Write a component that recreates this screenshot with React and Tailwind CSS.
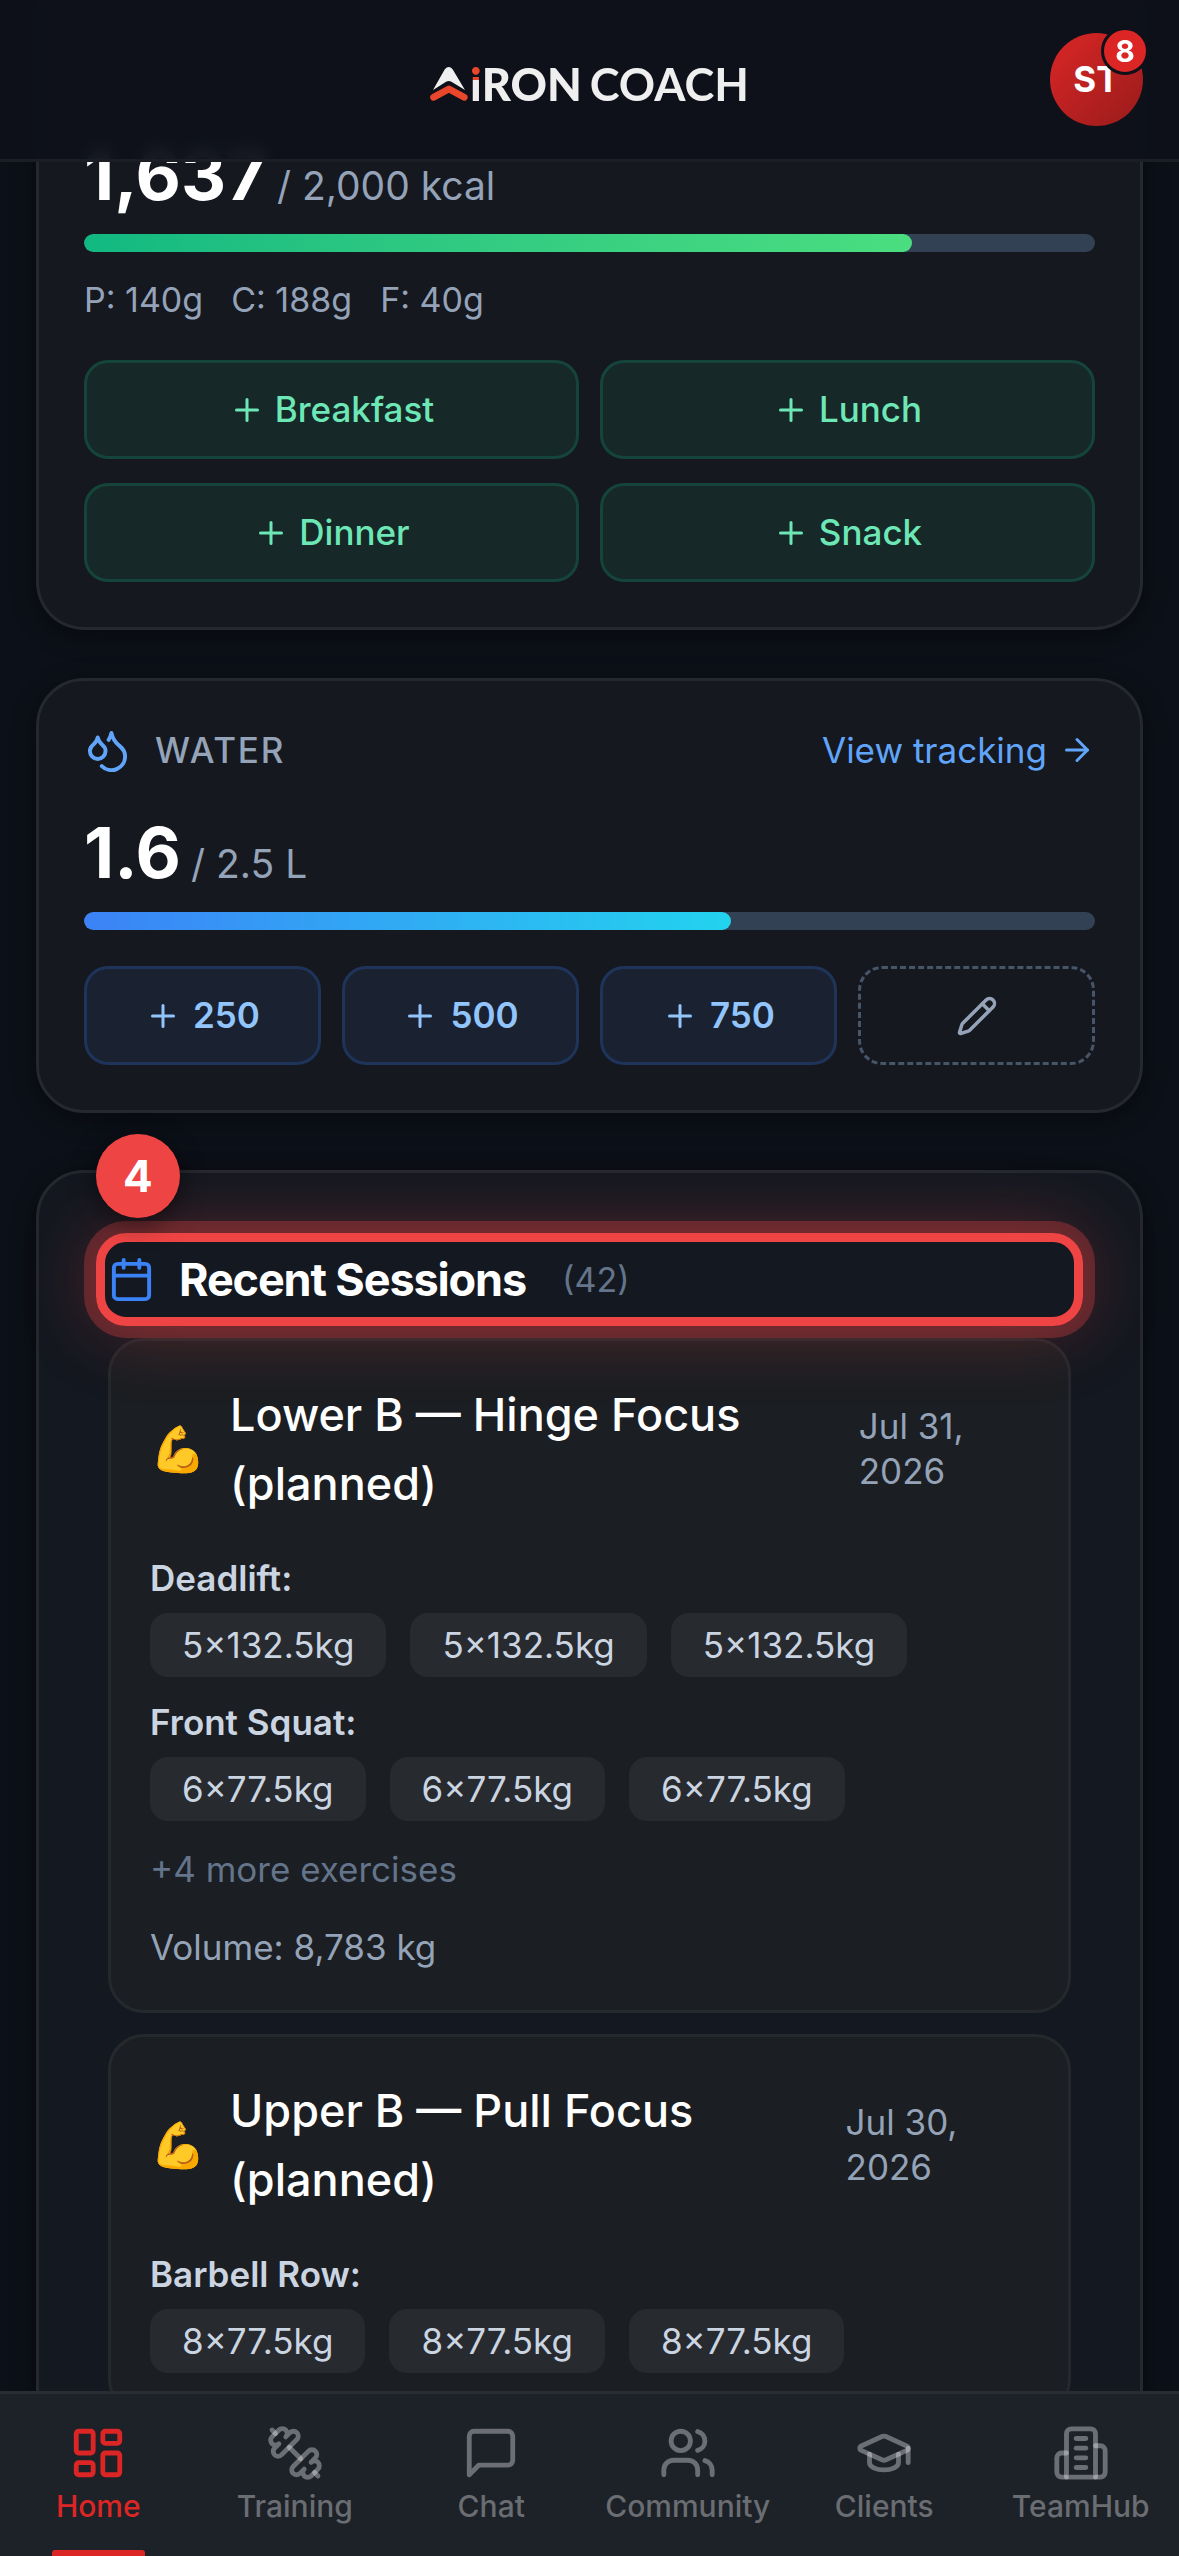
import { useState } from 'react'
import { ArrowRight, Calendar, Droplets, Pencil, Plus } from 'lucide-react'

const meals = ['Breakfast', 'Lunch', 'Dinner', 'Snack']
const waterAmounts = [250, 500, 750]

const sessions = [
  {
    title: 'Lower B — Hinge Focus (planned)',
    date: 'Jul 31, 2026',
    exercises: [
      { name: 'Deadlift', sets: ['5×132.5kg', '5×132.5kg', '5×132.5kg'] },
      { name: 'Front Squat', sets: ['6×77.5kg', '6×77.5kg', '6×77.5kg'] },
    ],
    more: 4,
    volume: '8,783',
  },
  {
    title: 'Upper B — Pull Focus (planned)',
    date: 'Jul 30, 2026',
    exercises: [
      { name: 'Barbell Row', sets: ['8×77.5kg', '8×77.5kg', '8×77.5kg'] },
    ],
  },
]

const navItems = [
  {
    label: 'Home',
    paths: [
      'M4 3h5a1 1 0 0 1 1 1v7a1 1 0 0 1-1 1H4a1 1 0 0 1-1-1V4a1 1 0 0 1 1-1z',
      'M15 3h5a1 1 0 0 1 1 1v3a1 1 0 0 1-1 1h-5a1 1 0 0 1-1-1V4a1 1 0 0 1 1-1z',
      'M15 12h5a1 1 0 0 1 1 1v7a1 1 0 0 1-1 1h-5a1 1 0 0 1-1-1v-7a1 1 0 0 1 1-1z',
      'M4 16h5a1 1 0 0 1 1 1v3a1 1 0 0 1-1 1H4a1 1 0 0 1-1-1v-3a1 1 0 0 1 1-1z',
    ],
  },
  {
    label: 'Training',
    paths: [
      'M14.4 14.4 9.6 9.6',
      'M18.657 21.485a2 2 0 1 1-2.829-2.828l-1.767 1.768a2 2 0 1 1-2.829-2.829l6.364-6.364a2 2 0 1 1 2.829 2.829l-1.768 1.767a2 2 0 1 1 2.828 2.829z',
      'm21.5 21.5-1.4-1.4',
      'M3.9 3.9 2.5 2.5',
      'M6.404 12.768a2 2 0 1 1-2.829-2.829l1.768-1.767a2 2 0 1 1-2.828-2.829l2.828-2.828a2 2 0 1 1 2.829 2.828l1.767-1.768a2 2 0 1 1 2.829 2.829z',
    ],
  },
  {
    label: 'Chat',
    paths: ['M21 15a2 2 0 0 1-2 2H7l-4 4V5a2 2 0 0 1 2-2h14a2 2 0 0 1 2 2z'],
  },
  {
    label: 'Community',
    paths: [
      'M16 21v-2a4 4 0 0 0-4-4H6a4 4 0 0 0-4 4v2',
      'M9 3a4 4 0 1 1 0 8a4 4 0 1 1 0-8z',
      'M22 21v-2a4 4 0 0 0-3-3.87',
      'M16 3.13a4 4 0 0 1 0 7.75',
    ],
  },
  {
    label: 'Clients',
    paths: [
      'M21.42 10.922a1 1 0 0 0-.019-1.838L12.83 5.18a2 2 0 0 0-1.66 0L2.6 9.08a1 1 0 0 0 0 1.832l8.57 3.908a2 2 0 0 0 1.66 0z',
      'M22 10v6',
      'M6 12.5V16a6 3 0 0 0 12 0v-3.5',
    ],
  },
  {
    label: 'TeamHub',
    paths: [
      'M6 22V4a2 2 0 0 1 2-2h8a2 2 0 0 1 2 2v18Z',
      'M6 12H4a2 2 0 0 0-2 2v6a2 2 0 0 0 2 2h2',
      'M18 9h2a2 2 0 0 1 2 2v9a2 2 0 0 1-2 2h-2',
      'M10 6h4',
      'M10 10h4',
      'M10 14h4',
      'M10 18h4',
    ],
  },
]

function Logo() {
  return (
    <div className="flex items-center font-[Lato,sans-serif] text-[45px] leading-[54px] text-[#efefef]">
      <svg viewBox="0 0 38 34" className="mr-0.5 h-[34px] w-[38px]">
        <path d="M14.8 2.2Q18.7 -2 22.6 2.2L35 23L21 14.6Q18.7 13.2 16.5 14.6L3 23Z" fill="#efefef" />
        <path d="M3.6 30.3 18.9 22 34.2 30.3" fill="none" stroke="#e8472b" strokeWidth="6.8" strokeLinecap="round" strokeLinejoin="round" />
      </svg>
      <span className="bg-[linear-gradient(#e8472b_43%,#efefef_43%)] bg-clip-text font-black text-transparent">i</span>
      <span className="font-black">RON</span>
      <span className="ml-2 font-bold">COACH</span>
    </div>
  )
}

function Header() {
  return (
    <header className="fixed inset-x-0 top-0 z-20 flex h-[162px] items-center justify-center border-b-3 border-[#1b1e24] bg-[#0e1119]/95 backdrop-blur-sm">
      <div className="mt-2">
        <Logo />
      </div>
      <button
        type="button"
        className="absolute right-9 top-[33px] size-[93px] rounded-full bg-linear-to-br from-[#dc2626] to-[#991b1b] text-[35px] font-bold text-white"
      >
        ST
        <span className="absolute -right-[6px] -top-[6px] flex size-12 items-center justify-center rounded-full border-3 border-[#0e1119] bg-[#dc2626] text-[30px]">
          8
        </span>
      </button>
    </header>
  )
}

function ProgressBar({ value, total, fill }) {
  return (
    <div className="h-[18px] overflow-hidden rounded-full bg-[#334155]">
      <div className={`h-full rounded-full bg-linear-to-r ${fill}`} style={{ width: `${(value / total) * 100}%` }} />
    </div>
  )
}

function Amount({ value, goal }) {
  return (
    <p className="mb-4 flex items-baseline gap-2.5 text-[70px] font-bold leading-[86px] text-white">
      {value}
      <span className="text-[39px] font-normal leading-12 text-[#94a3b8]">/ {goal}</span>
    </p>
  )
}

function NutritionCard() {
  return (
    <section className="rounded-b-[48px] border-3 border-t-0 border-[#25282e] bg-[#15181f] px-[45px] pb-[45px] pt-[132px] shadow-[0_6px_24px_rgba(0,0,0,0.4)]">
      <Amount value="1,637" goal="2,000 kcal" />
      <ProgressBar value={1637} total={2000} fill="from-[#10b981] to-[#4ade80]" />
      <div className="mt-6 flex gap-7 text-[34px] leading-12 text-[#94a3b8]">
        <span>P: 140g</span>
        <span>C: 188g</span>
        <span>F: 40g</span>
      </div>
      <div className="mt-9 grid grid-cols-2 gap-x-[21px] gap-y-6">
        {meals.map((meal) => (
          <button
            key={meal}
            type="button"
            className="flex h-[99px] items-center justify-center gap-2.5 rounded-3xl border-3 border-[#15453a] bg-[#162827] text-[35px] font-medium text-[#6ee7b7]"
          >
            <Plus size={36} />
            {meal}
          </button>
        ))}
      </div>
    </section>
  )
}

function WaterCard() {
  const [amount, setAmount] = useState(1600)

  return (
    <section className="mt-12 rounded-[48px] border-3 border-[#25282e] bg-[#15181f] p-[45px] shadow-[0_6px_24px_rgba(0,0,0,0.4)]">
      <div className="mb-9 flex items-center justify-between">
        <h2 className="flex items-center gap-6 text-[35px] font-medium leading-12 tracking-wider text-[#94a3b8]">
          <Droplets size={47} className="text-[#60a5fa]" />
          WATER
        </h2>
        <a href="#tracking" className="flex items-center gap-3 text-[35px] leading-12 text-[#60a5fa]">
          View tracking
          <ArrowRight size={36} />
        </a>
      </div>
      <Amount value={(amount / 1000).toFixed(1)} goal="2.5 L" />
      <ProgressBar value={amount} total={2500} fill="from-[#3b82f6] to-[#22d3ee]" />
      <div className="mt-9 grid grid-cols-4 gap-[21px]">
        {waterAmounts.map((ml) => (
          <button
            key={ml}
            type="button"
            onClick={() => setAmount((prev) => prev + ml)}
            className="flex h-[99px] items-center justify-center gap-3 rounded-3xl border-3 border-[#1f345a] bg-[#1a2232] text-[35px] font-semibold text-[#93c5fd]"
          >
            <Plus size={36} />
            {ml}
          </button>
        ))}
        <button
          type="button"
          aria-label="Custom amount"
          className="flex h-[99px] items-center justify-center rounded-3xl border-3 border-dashed border-[#475569] text-[#94a3b8]"
        >
          <Pencil size={42} />
        </button>
      </div>
    </section>
  )
}

function SessionCard({ session }) {
  return (
    <article className="rounded-[36px] border-3 border-[#25282d] bg-[#1b1e22] p-[39px]">
      <div className="flex items-center justify-between gap-6">
        <div className="flex items-center gap-6">
          <span className="text-[45px]">💪</span>
          <h3 className="text-[45px] font-medium leading-[69px] text-white">{session.title}</h3>
        </div>
        <time className="text-[35px] leading-[45px] text-[#94a3b8]">{session.date}</time>
      </div>
      <div className="mt-9 flex flex-col gap-[21px]">
        {session.exercises.map((exercise) => (
          <div key={exercise.name}>
            <p className="mb-[11px] text-[35px] font-semibold leading-12 text-[#cbd5e1]">{exercise.name}:</p>
            <div className="flex gap-6">
              {exercise.sets.map((set, index) => (
                <span key={index} className="rounded-[18px] bg-[#272a2f] px-8 text-[35px] leading-16 text-[#cbd5e1]">
                  {set}
                </span>
              ))}
            </div>
          </div>
        ))}
      </div>
      {session.more && <p className="mt-6 text-[35px] leading-12 text-[#64748b]">+{session.more} more exercises</p>}
      {session.volume && <p className="mt-[30px] text-[35px] leading-12 text-[#94a3b8]">Volume: {session.volume} kg</p>}
    </article>
  )
}

function RecentSessions() {
  return (
    <section className="mt-[57px] rounded-[48px] border-3 border-[#25282e] bg-[#141820] px-[69px] pb-[69px] pt-[72px] shadow-[0_6px_24px_rgba(0,0,0,0.4)]">
      <div className="relative flex h-[69px] items-center">
        <Calendar size={47} className="text-[#3b82f6]" />
        <h2 className="ml-6 text-[45px] font-bold tracking-tight text-white">Recent Sessions</h2>
        <span className="ml-9 text-[34px] text-[#64748b]">(42)</span>
        {/* Highlight ring with its step number */}
        <div className="pointer-events-none absolute -inset-3 z-10 rounded-[30px] border-9 border-[#ef4444] shadow-[0_0_0_12px_rgba(239,68,68,0.3),0_0_72px_rgba(239,68,68,0.35)]">
          <span className="absolute -left-[9px] -top-[108px] flex size-[84px] items-center justify-center rounded-full bg-[#ef4444] text-[44px] font-bold text-white shadow-[0_6px_24px_rgba(0,0,0,0.5)]">
            4
          </span>
        </div>
      </div>
      <div className="mt-6 flex flex-col gap-[21px]">
        {sessions.map((session) => (
          <SessionCard key={session.title} session={session} />
        ))}
      </div>
    </section>
  )
}

function BottomNav() {
  const [active, setActive] = useState('Home')

  return (
    <nav className="relative z-20 grid shrink-0 grid-cols-6 border-t-3 border-[#292d32] bg-[#1d2128]">
      {navItems.map(({ label, paths }) => (
        <button
          key={label}
          type="button"
          onClick={() => setActive(label)}
          className={`relative flex flex-col items-center pb-[29px] pt-[30px] ${label === active ? 'text-[#dc2626]' : 'text-white/35'}`}
        >
          <svg
            viewBox="0 0 24 24"
            className="size-[58px]"
            fill="none"
            stroke="currentColor"
            strokeWidth="2"
            strokeLinecap="round"
            strokeLinejoin="round"
          >
            {paths.map((d) => (
              <path key={d} d={d} />
            ))}
          </svg>
          <span className="mt-[3px] text-[30px] font-medium leading-[42px]">{label}</span>
          {label === active && <span className="absolute bottom-0 h-[6px] w-[93px] rounded-t-[3px] bg-[#dc2626]" />}
        </button>
      ))}
    </nav>
  )
}

export default function App() {
  return (
    <div className="flex h-screen flex-col overflow-hidden bg-[#0c1018] font-[Inter,sans-serif]">
      <Header />
      <main className="min-h-0 flex-1 overflow-hidden px-9">
        <NutritionCard />
        <WaterCard />
        <RecentSessions />
      </main>
      <BottomNav />
    </div>
  )
}
